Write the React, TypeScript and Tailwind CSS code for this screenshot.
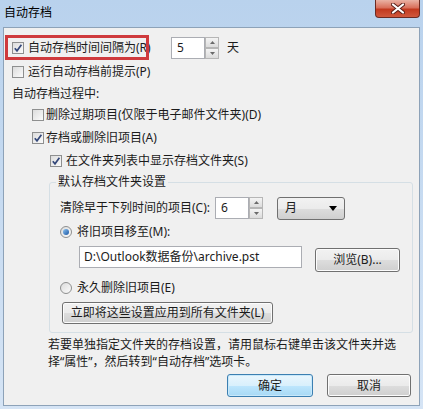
import React from "react";

const btn =
  "flex items-center justify-center rounded-[3px] border border-[#707070] bg-[linear-gradient(#f2f2f2_0%,#ebebeb_50%,#dddddd_51%,#cfcfcf_100%)] shadow-[inset_0_0_0_1px_#fcfcfc] text-[12px]";

function Check({ checked }: { checked?: boolean }) {
  return (
    <span className="w-[12px] h-[12px] shrink-0 border border-[#8e8f8f] bg-linear-to-br from-[#dcdcdc] to-[#fbfbfb] flex items-center justify-center">
      {checked && (
        <svg width="10" height="10" viewBox="0 0 10 10">
          <path d="M1.8 5.2 L4 7.8 L8.4 1.8" fill="none" stroke="#34487a" strokeWidth="1.7" />
        </svg>
      )}
    </span>
  );
}

function Radio({ on }: { on?: boolean }) {
  return (
    <span className="w-[12px] h-[12px] shrink-0 rounded-full border border-[#8e8f8f] bg-linear-to-br from-[#dcdcdc] to-[#fbfbfb] flex items-center justify-center">
      {on && <span className="w-[6px] h-[6px] rounded-full bg-linear-to-br from-[#8cc3f0] to-[#1a56a3]" />}
    </span>
  );
}

function Spin({ value }: { value: string }) {
  return (
    <div className="flex items-stretch h-[22px]">
      <div className="w-[34px] border border-[#abadb3] bg-white flex items-center pl-[5px] text-[12px]">{value}</div>
      <div className="w-[14px] flex flex-col">
        {[0, 1].map((i) => (
          <div
            key={i}
            className="flex-1 border border-[#b6b6b6] bg-linear-to-b from-[#f4f4f4] to-[#dcdcdc] flex items-center justify-center"
          >
            <svg width="5" height="3" viewBox="0 0 5 3">
              <path d={i === 0 ? "M0 3 L2.5 0 L5 3 Z" : "M0 0 L2.5 3 L5 0 Z"} fill="#6a6a6a" />
            </svg>
          </div>
        ))}
      </div>
    </div>
  );
}

export default function App() {
  return (
    <div className="w-[423px] h-[409px] flex flex-col bg-linear-to-b from-[#b9d2ed] to-[#d5e4f5] font-['Noto_Sans','Noto_Sans_CJK_SC',sans-serif] text-[12px] text-[#1b1b1b] overflow-hidden">
      {/* title bar */}
      <div className="h-[27px] flex items-start justify-between pl-[4px] pr-[3px]">
        <span className="mt-[4px] leading-[18px] text-black">自动存档</span>
        <div className="w-[45px] h-[18px] rounded-b-[4px] border border-t-0 border-[#6b2a22] bg-[linear-gradient(#eab2a4_0%,#d9705c_45%,#c2391f_55%,#d0583d_100%)] flex items-center justify-center">
          <svg width="14" height="11" viewBox="0 0 14 11">
            <path d="M2 1.5 L12 9.5 M12 1.5 L2 9.5" stroke="#5a1f18" strokeWidth="4" strokeLinecap="round" />
            <path d="M2 1.5 L12 9.5 M12 1.5 L2 9.5" stroke="#ffffff" strokeWidth="2.2" strokeLinecap="round" />
          </svg>
        </div>
      </div>

      {/* dialog body */}
      <div className="mx-[3px] h-[379px] border border-[#8da2b8] bg-[#f0f0f0] relative flex flex-col leading-[16px]">
        {/* red highlight */}
        <div className="absolute left-[1px] top-[7px] w-[144px] h-[25px] border-[3px] border-[#cf3a3d]" />

        <div className="mt-[8px] h-[24px] flex items-center pl-[8px]">
          <Check checked />
          <span className="ml-[4px] w-[143px] whitespace-nowrap">自动存档时间间隔为(R)</span>
          <Spin value="5" />
          <span className="ml-[8px]">天</span>
        </div>
        <div className="h-[24px] flex items-center pl-[8px]">
          <Check />
          <span className="ml-[4px]">运行自动存档前提示(P)</span>
        </div>
        <div className="h-[19px] flex items-center pl-[8px]">自动存档过程中:</div>
        <div className="h-[23px] flex items-center pl-[28px]">
          <Check />
          <span className="ml-[2px]">删除过期项目(仅限于电子邮件文件夹)(D)</span>
        </div>
        <div className="h-[23px] flex items-center pl-[28px]">
          <Check checked />
          <span className="ml-[2px]">存档或删除旧项目(A)</span>
        </div>
        <div className="h-[23px] flex items-center pl-[46px]">
          <Check checked />
          <span className="ml-[4px]">在文件夹列表中显示存档文件夹(S)</span>
        </div>

        <fieldset className="mt-[2px] ml-[45px] w-[364px] border border-[#d5dfe5] rounded-[3px] pb-[8px]">
          <legend className="ml-[6px] px-[2px] leading-[16px]">默认存档文件夹设置</legend>
          <div className="mt-[6px] h-[24px] flex items-center pl-[10px]">
            <span className="w-[155px] whitespace-nowrap">清除早于下列时间的项目(C):</span>
            <Spin value="6" />
            <div className="ml-[14px] w-[68px] h-[23px] rounded-[3px] border border-[#707070] bg-[linear-gradient(#f2f2f2_0%,#ebebeb_50%,#dddddd_51%,#cfcfcf_100%)] flex items-center justify-between pl-[7px] pr-[7px]">
              <span>月</span>
              <svg width="8" height="5" viewBox="0 0 8 5">
                <path d="M0 0 L8 0 L4 5 Z" fill="#000" />
              </svg>
            </div>
          </div>
          <div className="h-[24px] flex items-center pl-[10px]">
            <Radio on />
            <span className="ml-[5px]">将旧项目移至(M):</span>
          </div>
          <div className="mt-[2px] h-[26px] flex items-start pl-[29px]">
            <div className="w-[223px] h-[22px] border border-[#abadb3] bg-white flex items-center pl-[4px] whitespace-nowrap">
              D:\Outlook数据备份\archive.pst
            </div>
            <div className={`ml-[13px] mt-[2px] w-[85px] h-[24px] ${btn}`}>浏览(B)...</div>
          </div>
          <div className="mt-[4px] h-[24px] flex items-center pl-[10px]">
            <Radio />
            <span className="ml-[5px]">永久删除旧项目(E)</span>
          </div>
          <div className={`mt-[2px] ml-[12px] w-[211px] h-[22px] ${btn}`}>立即将这些设置应用到所有文件夹(L)</div>
        </fieldset>

        <p className="mt-[3px] pl-[44px] leading-[17px] whitespace-nowrap">
          若要单独指定文件夹的存档设置，请用鼠标右键单击该文件夹并选
          <br />
          择“属性”，然后转到“自动存档”选项卡。
        </p>

        <div className="mt-[4px] flex justify-end gap-[14px] pr-[8px]">
          <div className="w-[86px] h-[23px] rounded-[3px] border border-[#3c7fb1] bg-[linear-gradient(#eaf6fd_0%,#d9f0fc_50%,#bee6fd_51%,#a7d9f5_100%)] shadow-[inset_0_0_0_1px_#c8e8fa] flex items-center justify-center">
            确定
          </div>
          <div className={`w-[84px] h-[23px] ${btn}`}>取消</div>
        </div>
      </div>
    </div>
  );
}
